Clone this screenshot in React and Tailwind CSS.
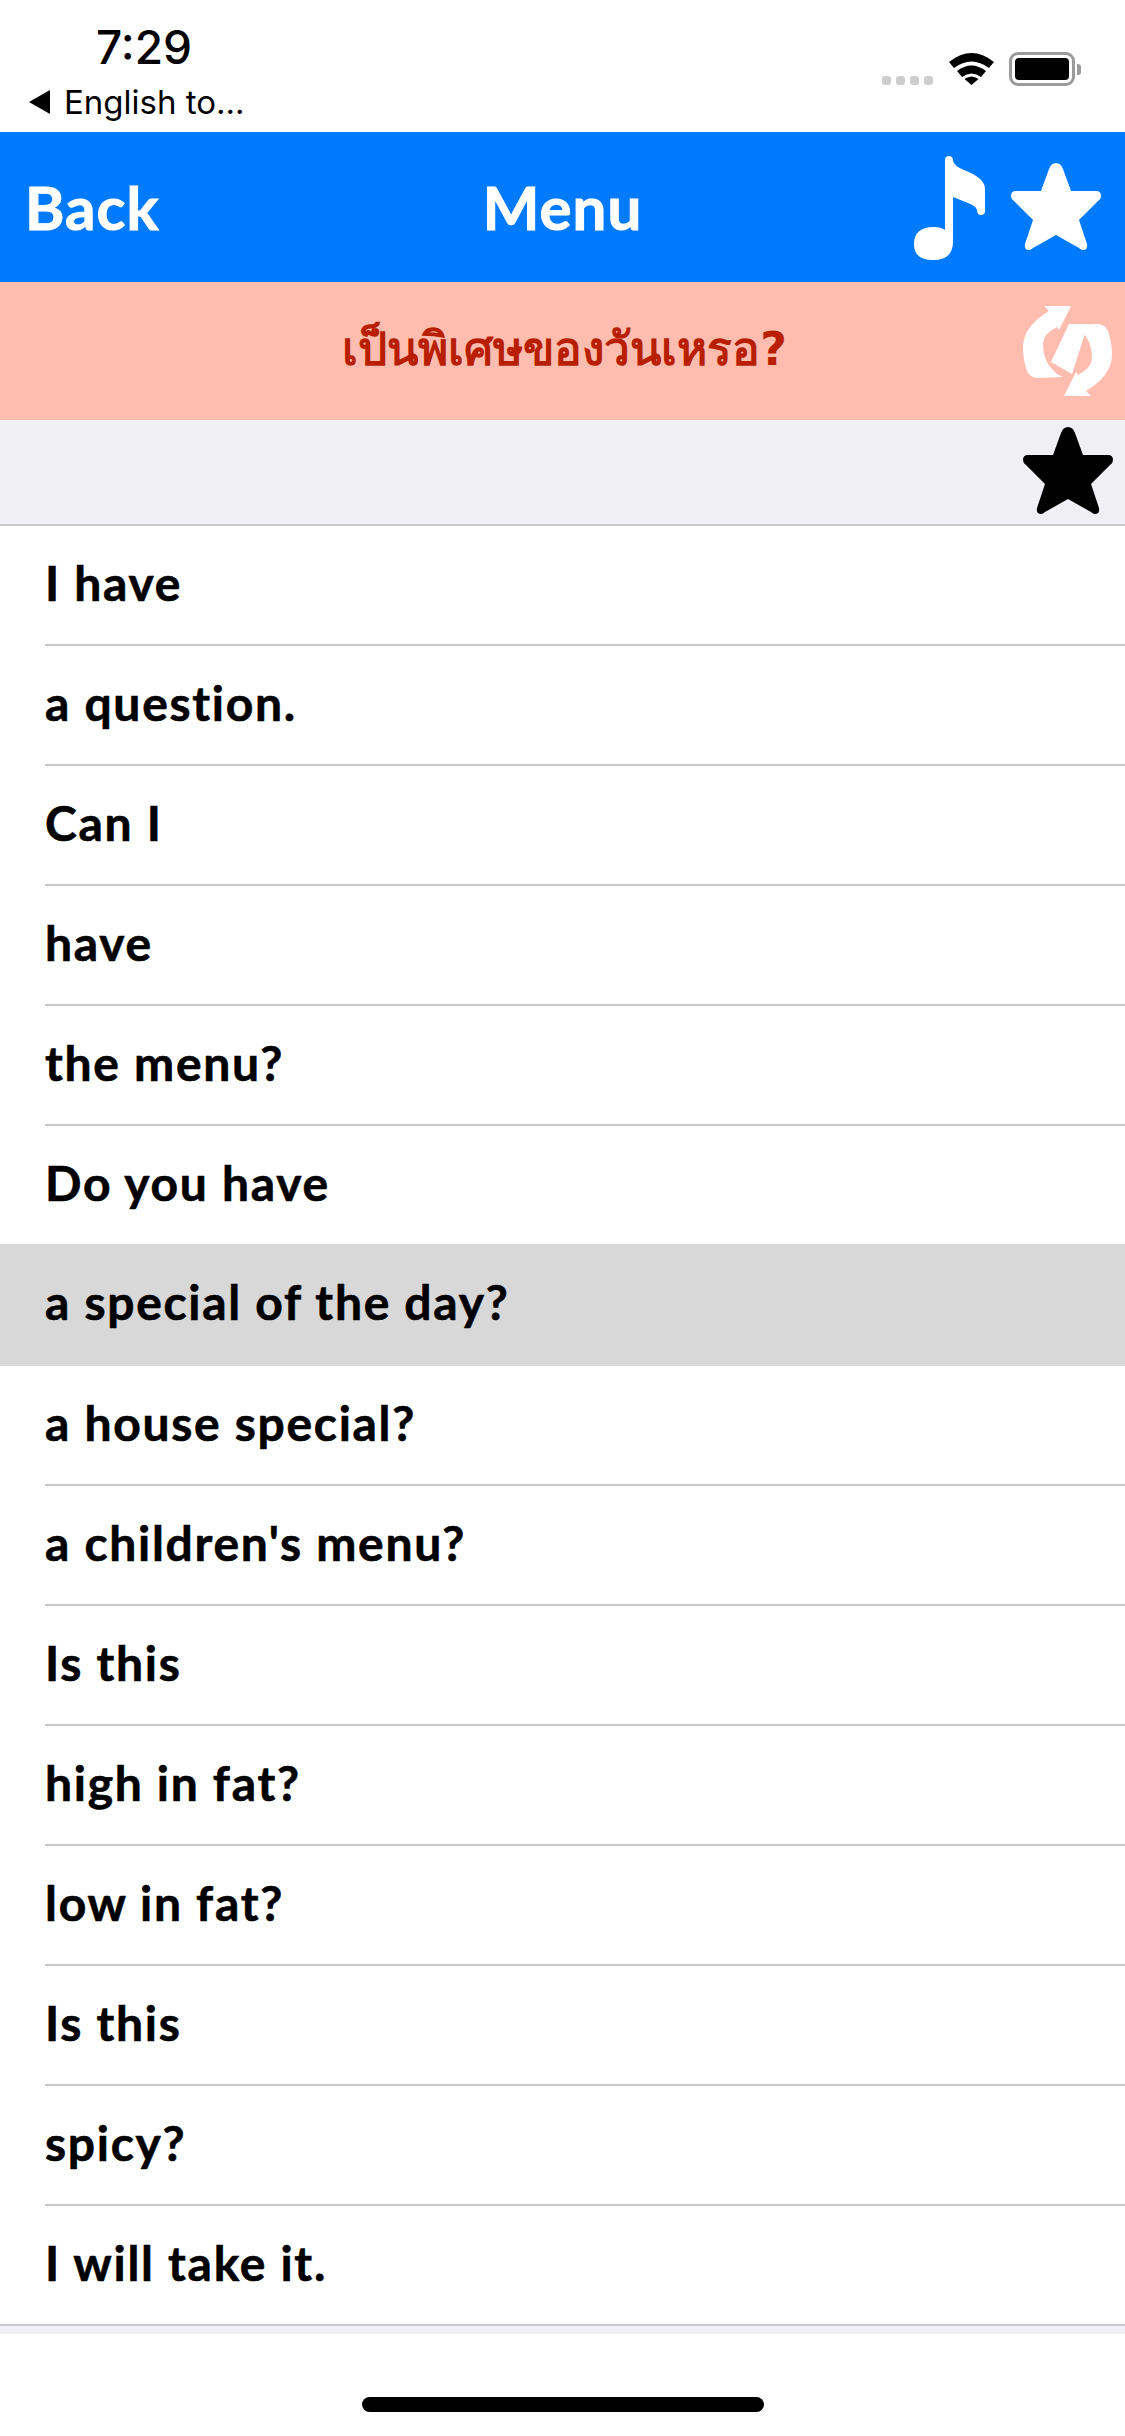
import React from "react";

const phrases = [
	"I have",
	"a question.",
	"Can I",
	"have",
	"the menu?",
	"Do you have",
	"a special of the day?",
	"a house special?",
	"a children's menu?",
	"Is this",
	"high in fat?",
	"low in fat?",
	"Is this",
	"spicy?",
	"I will take it.",
];

const STAR_PATH =
	"M45 0Q50 0 52 6L60 28L85 28Q90 28 90 33Q90 36 87 38L68 57L76 81Q77 87 72 87Q70 87 68 85L45 72L22 85Q20 87 18 87Q13 87 14 81L22 57L3 38Q0 36 0 33Q0 28 5 28L30 28L38 6Q40 0 45 0Z";

const Star = ({ className }) => (
	<svg viewBox="0 0 90 87" className={className} fill="currentColor">
		<path d={STAR_PATH} />
	</svg>
);

const MusicNote = () => (
	<svg viewBox="0 0 71 104" className="w-[71px] h-[104px] text-white" fill="currentColor">
		<path d="M31 4Q31 0 35 0Q39 0 39 5Q40 10 50 14Q71 22 71 33L71 55Q71 59 67 59Q63 59 63 54Q62 50 54 47L39 41L39 86Q39 104 19 104Q0 104 0 88Q0 71 20 71Q27 71 31 74Z" />
	</svg>
);

const SwapIcon = () => (
	<svg viewBox="0 0 89 90" className="w-[89px] h-[90px] text-white" fill="currentColor">
		<path d="M21 0L48 0L36 24L34 21Q20 28 20 38Q20 54 29 63Q33 68 40 71L14 72Q5 71 3 62Q0 52 0 40Q1 20 26 5Z" />
		<path d="M68 90L41 90L53 66L55 69Q69 62 69 52Q69 36 60 27Q56 22 49 19L75 18Q84 19 86 28Q89 38 89 50Q88 70 63 85Z" />
		<path d="M46 18L65 18L49 68L28 56Z" />
	</svg>
);

const StatusBar = () => (
	<div className="h-[132px] bg-white flex justify-between font-['Inter',sans-serif]">
		<div className="flex flex-col">
			<div className="pl-[96px] pt-[22px] text-[46px] leading-[50px] font-medium text-black">7:29</div>
			<div className="flex items-center gap-[14px] pl-[29px] mt-[10px]">
				<svg viewBox="0 0 21 24" className="w-[21px] h-[24px] text-black" fill="currentColor">
					<path d="M21 0L21 24L0 12Z" />
				</svg>
				<span className="text-[33px] leading-[40px] text-black">English to...</span>
			</div>
		</div>
		<div className="flex items-start pt-[52px] pr-[44px]">
			<div className="flex gap-[5px] mt-[24px] mr-[16px]">
				{[0, 1, 2, 3].map((i) => (
					<div key={i} className="w-[9px] h-[9px] rounded-[3px] bg-[#cdcdcd]" />
				))}
			</div>
			<svg viewBox="0 0 45 33" className="w-[45px] h-[33px] mr-[15px] text-black" fill="currentColor">
				<path d="M0 10Q22.5 -8 45 10L40 16Q22.5 3 5 16Z" />
				<path d="M8 19Q22.5 8 37 19L32 25Q22.5 18 13 25Z" />
				<path d="M15.5 27Q22.5 22 29.5 27L22.5 33Z" />
			</svg>
			<div className="flex items-center">
				<div className="w-[66px] h-[34px] rounded-[9px] border-[3px] border-[#9b9b9b] p-[3px]">
					<div className="w-full h-full rounded-[4px] bg-black" />
				</div>
				<div className="w-[4px] h-[11px] ml-[2px] rounded-r-[3px] bg-[#9b9b9b]" />
			</div>
		</div>
	</div>
);

export default function App() {
	return (
		<div className="w-[1125px] h-[2436px] bg-white flex flex-col font-['Lato',sans-serif]">
			<StatusBar />

			{/* Nav bar */}
			<div className="h-[150px] bg-[#007aff] grid grid-cols-3 items-center text-white">
				<div className="pl-[25px] text-[60px] font-bold leading-none tracking-[1px] [-webkit-text-stroke:1px_white]">Back</div>
				<div className="text-center text-[60px] font-bold leading-none tracking-[1px] [-webkit-text-stroke:1px_white]">Menu</div>
				<div className="flex justify-end items-start pt-[24px] h-full pr-[24px]">
					<MusicNote />
					<Star className="w-[90px] h-[87px] mt-[7px] ml-[26px] text-white" />
				</div>
			</div>

			{/* Translation */}
			<div className="relative h-[138px] bg-[#ffbdb0] flex items-center justify-center">
				<span className="text-[46px] font-bold text-[#b81e00] font-['DejaVu_Sans',sans-serif] pb-[4px] pl-[4px]">เป็นพิเศษของวันเหรอ?</span>
				<div className="absolute right-[13px] top-[24px]">
					<SwapIcon />
				</div>
			</div>

			{/* Favourite strip */}
			<div className="h-[106px] bg-[#efeff4] border-b-2 border-[#c8c7cc] flex justify-end pt-[7px] pr-[12px]">
				<Star className="w-[90px] h-[87px] text-black" />
			</div>

			{/* Phrase list */}
			<div className="flex flex-col">
				{phrases.map((phrase, i) => (
					<div key={i} className={i === 6 ? "h-[122px] -mt-[2px] bg-[#d8d8d8] pl-[45px]" : "h-[120px] bg-white pl-[45px]"}>
						<div className={i === 5 || i === 6 || i === 14 ? "h-full flex items-center pb-[4px] border-b-2 border-transparent" : "h-full flex items-center pb-[4px] border-b-2 border-[#c8c7cc]"}>
							<span className="text-[48px] font-bold text-black leading-none tracking-[1.7px] [-webkit-text-stroke:0.6px_black]">{phrase}</span>
						</div>
					</div>
				))}
			</div>
			<div className="h-[10px] -mt-[2px] bg-[#efeff4] border-t-2 border-[#c8c7cc]" />

			{/* Home indicator */}
			<div className="flex-1 flex justify-center pt-[63px]">
				<div className="w-[402px] h-[15px] rounded-full bg-black" />
			</div>
		</div>
	);
}
